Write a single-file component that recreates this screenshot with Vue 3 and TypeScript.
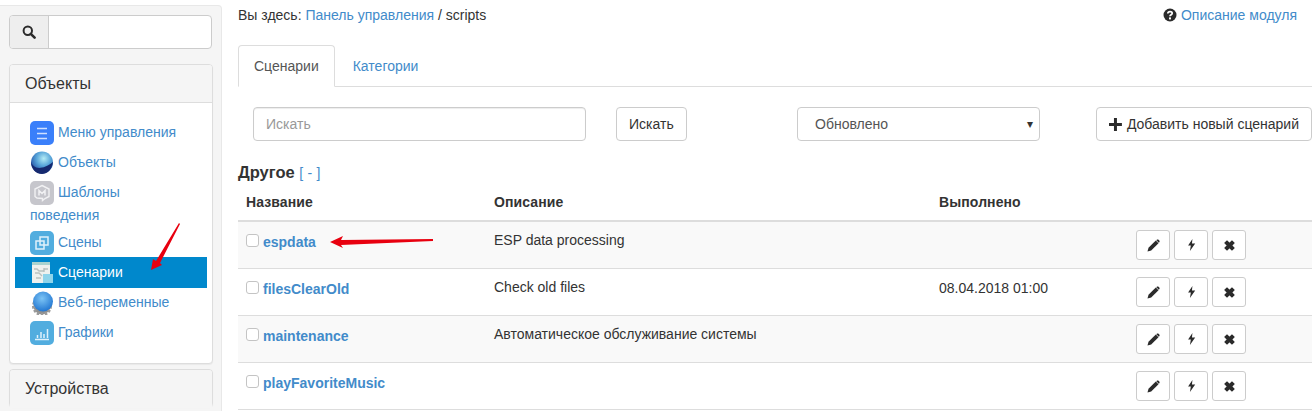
<script setup lang="ts">
interface Row { name: string; desc: string; done: string }
const rows: Row[] = [
  { name: 'espdata', desc: 'ESP data processing', done: '' },
  { name: 'filesClearOld', desc: 'Check old files', done: '08.04.2018 01:00' },
  { name: 'maintenance', desc: 'Автоматическое обслуживание системы', done: '' },
  { name: 'playFavoriteMusic', desc: '', done: '' },
]
</script>

<template>
  <div class="page">
    <aside class="side">
      <div class="search-group">
        <span class="search-addon">
          <svg width="14" height="14" viewBox="0 0 14 14"><circle cx="5.8" cy="5.8" r="4.2" fill="none" stroke="#2b2b2b" stroke-width="2" /><path d="M8.8 8.8 L12.6 12.6" stroke="#2b2b2b" stroke-width="2.6" stroke-linecap="round" /></svg>
        </span>
        <span class="search-field"></span>
      </div>

      <section class="panel">
        <div class="panel-head">Объекты</div>
        <ul class="menu">
          <li class="item">
            <svg class="ic" viewBox="0 0 24 24"><rect width="24" height="24" rx="5" fill="#3a7ffa" /><path d="M7 7.5h10M7 12.500h10M7 17.500h10" stroke="#cfe0ff" stroke-width="1.600" /></svg>
            <a>Меню управления</a>
          </li>
          <li class="item">
            <svg class="ic" viewBox="0 0 24 24"><defs><radialGradient id="g1" cx="58%" cy="32%" r="62%"><stop offset="0" stop-color="#b4ecf5" /><stop offset=".55" stop-color="#56a3d8" /><stop offset="1" stop-color="#2a5bab" /></radialGradient></defs><circle cx="12" cy="11.500" r="11" fill="url(#g1)" /><path d="M1.200 10.500c1 6 9 10.500 21.800.500-1 8-6 12-11 12C5 23 1 17 1.200 10.500z" fill="#16296f" /></svg>
            <a>Объекты</a>
          </li>
          <li class="item">
            <svg class="ic" viewBox="0 0 24 24"><rect width="24" height="24" rx="5" fill="#c6c6cc" /><path d="M12 4.5 19 8v7.5l-4 2-2.5 2v-2L7 17l-2-1.5V8z" fill="none" stroke="#f1f1f3" stroke-width="1.4" /><path d="M9 14.500v-5l3 3 3-3v5" fill="none" stroke="#f1f1f3" stroke-width="1.5" /></svg>
            <a>Шаблоны поведения</a>
          </li>
          <li class="item">
            <svg class="ic" viewBox="0 0 24 24"><rect width="24" height="24" rx="5" fill="#52addf" /><path d="M10 6h8v8h-8zM6 10h8v8H6z" fill="none" stroke="#dff1fb" stroke-width="1.5" /></svg>
            <a>Сцены</a>
          </li>
          <li class="item active">
            <svg class="ic" viewBox="0 0 24 24"><rect x="2" y="1" width="18" height="21" fill="#eef1ee" /><rect x="2" y="1" width="18" height="3" fill="#a9d3cf" /><path d="M4 8h3l2 2h4l2-2h3M5 12h4l3 3M6 17h5M14 7v4" fill="none" stroke="#b9c2c0" stroke-width="1.400" /><rect x="13" y="13" width="10" height="9" fill="#8fd4ea" /></svg>
            <a>Сценарии</a>
          </li>
          <li class="item">
            <svg class="ic" viewBox="0 0 24 24"><circle cx="12" cy="15" r="8.500" fill="#8f8f8f" stroke="#9a9a9a" stroke-dasharray="2.500 1.500" stroke-width="3" /><defs><radialGradient id="g2" cx="45%" cy="35%" r="70%"><stop offset="0" stop-color="#7cc4f5" /><stop offset="1" stop-color="#1b71cf" /></radialGradient></defs><circle cx="13" cy="10.500" r="10" fill="url(#g2)" /></svg>
            <a>Веб-переменные</a>
          </li>
          <li class="item">
            <svg class="ic" viewBox="0 0 24 24"><rect width="24" height="24" rx="5" fill="#52addf" /><path d="M5 18.500h14M7.500 17v-3M11 17v-6M14 17v-4M17.500 17V8" stroke="#dff1fb" stroke-width="1.500" /></svg>
            <a>Графики</a>
          </li>
        </ul>
      </section>

      <section class="panel panel-closed">
        <div class="panel-head">Устройства</div>
      </section>

      <svg class="arrow arrow-side" width="36" height="50" viewBox="0 0 36 50"><path d="M30 0 L31 1 L11 40 L13 42 L2 47 L4 36 L7 38 Z" fill="#e8000f" /></svg>
    </aside>

    <main class="main">
      <div class="crumbs">
        <div>Вы здесь: <a>Панель управления</a> / scripts</div>
        <a class="help">
          <svg width="14" height="14" viewBox="0 0 14 14"><circle cx="7" cy="7" r="6.500" fill="#2b2b2b" /><path d="M4.800 5.500C5 3 9.200 3 9.200 5.300 9.200 6.800 7 6.800 7 8.300" fill="none" stroke="#fff" stroke-width="1.700" /><rect x="6" y="9.400" width="2" height="2" fill="#fff" /></svg>
          Описание модуля
        </a>
      </div>

      <nav class="tabs">
        <span class="tab current">Сценарии</span>
        <a class="tab">Категории</a>
      </nav>

      <div class="filters">
        <span class="input">Искать</span>
        <span class="btn find">Искать</span>
        <span class="select">Обновлено<i class="caret">▾</i></span>
        <span class="btn add">
          <svg width="13" height="13" viewBox="0 0 13 13"><path d="M5 0h3v5h5v3H8v5H5V8H0V5h5z" fill="#2b2b2b" /></svg>
          Добавить новый сценарий
        </span>
      </div>

      <h4 class="group">Другое <a>[ - ]</a></h4>

      <div class="table">
        <div class="row head">
          <span class="c-name">Название</span>
          <span class="c-desc">Описание</span>
          <span class="c-done">Выполнено</span>
        </div>
        <div v-for="r in rows" :key="r.name" class="row body">
          <span class="c-name">
            <i class="check"></i><a>{{ r.name }}</a>
          </span>
          <span class="c-desc">{{ r.desc }}</span>
          <span class="c-done">{{ r.done }}</span>
          <span class="c-act">
            <span class="mini">
              <svg width="13" height="13" viewBox="0 0 13 13"><path d="M0.500 12.500 1.500 8.800 8.800 1.500 11.500 4.200 4.200 11.500Z" fill="#2b2b2b" /><path d="M9.800.8c.6-.5 1.200-.5 1.700 0l.8.800c.5.500.5 1.100 0 1.700l-.5.400-2.500-2.500z" fill="#2b2b2b" /></svg>
            </span>
            <span class="mini">
              <svg width="9" height="12" viewBox="0 0 9 13"><path d="M5.500 0 .8 7h3L2.800 13 8.500 5H5z" fill="#2b2b2b" /></svg>
            </span>
            <span class="mini">
              <svg width="13" height="13" viewBox="0 0 11 11"><path d="M1.700 3.400 3.400 1.700 5.500 3.800 7.600 1.700 9.300 3.400 7.200 5.500 9.300 7.600 7.600 9.300 5.500 7.200 3.400 9.300 1.700 7.600 3.800 5.500Z" fill="#2b2b2b" stroke="#2b2b2b" /></svg>
            </span>
          </span>
        </div>
      </div>

      <svg class="arrow arrow-row" width="103" height="14" viewBox="0 0 103 14"><path d="M0 7 L13 1 L11 5 L103 4 L103 6 L11 10 L13 13 Z" fill="#e8000f" /></svg>
    </main>
  </div>
</template>

<style>
html, body { margin: 0; background: #fff; overflow: hidden; }
</style>

<style scoped>
.page {
  display: flex;
  width: 1315px;
  height: 411px;
  overflow: hidden;
  font-family: "Liberation Sans", Arial, sans-serif;
  font-size: 14px;
  line-height: 20px;
  color: #333;
}
a { color: #428bca; }

.side {
  position: relative;
  box-sizing: border-box;
  width: 222px;
  height: 420px;
  margin-top: 5px;
  padding: 9px 9px 0;
  background: #f5f5f5;
  border: 1px solid #e8e8e8;
  border-left: 0;
  border-radius: 0 4px 4px 0;
  flex: none;
}
.search-group {
  display: flex;
  box-sizing: border-box;
  width: 203px;
  height: 34px;
  border: 1px solid #ccc;
  border-radius: 4px;
  overflow: hidden;
  background: #fff;
}
.search-addon {
  display: flex;
  align-items: center;
  justify-content: center;
  width: 38px;
  background: #eee;
  border-right: 1px solid #ccc;
}
.search-field { flex: 1; }

.panel {
  box-sizing: border-box;
  width: 204px;
  margin-top: 15px;
  height: 300px;
  background: #fff;
  border: 1px solid #ddd;
  border-radius: 4px;
  box-shadow: 0 1px 1px rgba(0,0,0,.05);
}
.panel-head {
  box-sizing: border-box;
  height: 38px;
  padding: 8px 15px;
  font-size: 16px;
  line-height: 22px;
  background: #f5f5f5;
  border-bottom: 1px solid #ddd;
  border-radius: 3px 3px 0 0;
}
.panel-closed { height: 38px; margin-top: 5px; background: #f5f5f5; }
.panel-closed .panel-head { border-bottom: 0; }

.menu { list-style: none; margin: 0; padding: 14px 5px 0; }
.item {
  padding: 4px 15px;
  line-height: 23px;
  height: 22px;
}
.item a { vertical-align: top; }
.ic {
  width: 24px;
  height: 24px;
  margin-right: 4px;
  vertical-align: top;
  margin-bottom: -2px;
}
.item:nth-child(3) { height: 42px; }
.active { background: #0088cc; padding-bottom: 5px; margin-bottom: -1px; }
.active a { color: #fff; }

.arrow { position: absolute; }
.arrow-side { left: 149px; top: 217px; }
.arrow-row { left: 108px; top: 235px; }

.main {
  position: relative;
  box-sizing: border-box;
  flex: 1;
  padding: 0 3px 0 16px;
  min-width: 0;
}
.crumbs {
  display: flex;
  justify-content: space-between;
  height: 45px;
  padding: 5px 15px 0 0;
  box-sizing: border-box;
}
.help { display: flex; align-items: center; gap: 4px; height: 20px; }
.tabs {
  display: flex;
  height: 42px;
  box-sizing: border-box;
  border-bottom: 1px solid #ddd;
}
.tab {
  box-sizing: border-box;
  height: 42px;
  padding: 10px 15px;
  border: 1px solid transparent;
  border-radius: 4px 4px 0 0;
  margin-right: 2px;
}
.current { border-color: #ddd; border-bottom-color: #fff; background: #fff; color: #555; }

.filters {
  display: flex;
  align-items: flex-start;
  padding: 20px 0 0 15px;
  height: 73px;
  box-sizing: border-box;
}
.input, .select, .btn {
  box-sizing: border-box;
  height: 34px;
  border: 1px solid #ccc;
  border-radius: 4px;
  padding: 6px 12px;
  background: #fff;
}
.input { width: 333px; color: #999; box-shadow: inset 0 1px 1px rgba(0,0,0,.075); }
.find { margin-left: 30px; width: 71px; }
.select { position: relative; width: 243px; margin-left: 110px; padding-left: 17px; color: #555; }
.caret { position: absolute; right: 6px; top: 6px; font-style: normal; font-size: 12px; color: #333; }
.add { margin-left: 56px; width: 216px; white-space: nowrap; padding: 6px 12px; display: flex; align-items: center; gap: 5px; }

.group { margin: 0; height: 25px; padding-top: 2px; font-size: 16.5px; line-height: 20px; font-weight: 700; box-sizing: border-box; }
.group a { font-size: 14px; font-weight: 400; letter-spacing: .2px; }

.table { width: 1074px; }
.row { display: flex; box-sizing: border-box; }
.head { height: 37px; padding-top: 7px; border-bottom: 2px solid #ddd; font-weight: 700; letter-spacing: .1px; }
.body { height: 47px; border-bottom: 1px solid #ddd; padding-top: 8px; }
.body:nth-child(2) { background: #f9f9f9; }
.body:nth-child(4) { background: #f9f9f9; }
.c-name { width: 256px; padding-left: 8px; box-sizing: border-box; white-space: nowrap; }
.body .c-name a { font-weight: 700; position: relative; top: 2px; }
.c-desc { width: 445px; }
.c-done { width: 197px; }
.c-act { display: flex; gap: 4px; margin-top: 0; }
.body .c-done { padding-top: 1px; }
.check {
  display: inline-block;
  position: relative;
  top: 2px;
  box-sizing: border-box;
  width: 13px;
  height: 13px;
  margin-right: 4px;
  border: 1px solid #c4c4c4;
  border-radius: 3px;
  background: #fff;
}
.mini {
  display: flex;
  align-items: center;
  justify-content: center;
  box-sizing: border-box;
  width: 34px;
  height: 30px;
  background: #fff;
  border: 1px solid #ccc;
  border-radius: 3px;
}
</style>
